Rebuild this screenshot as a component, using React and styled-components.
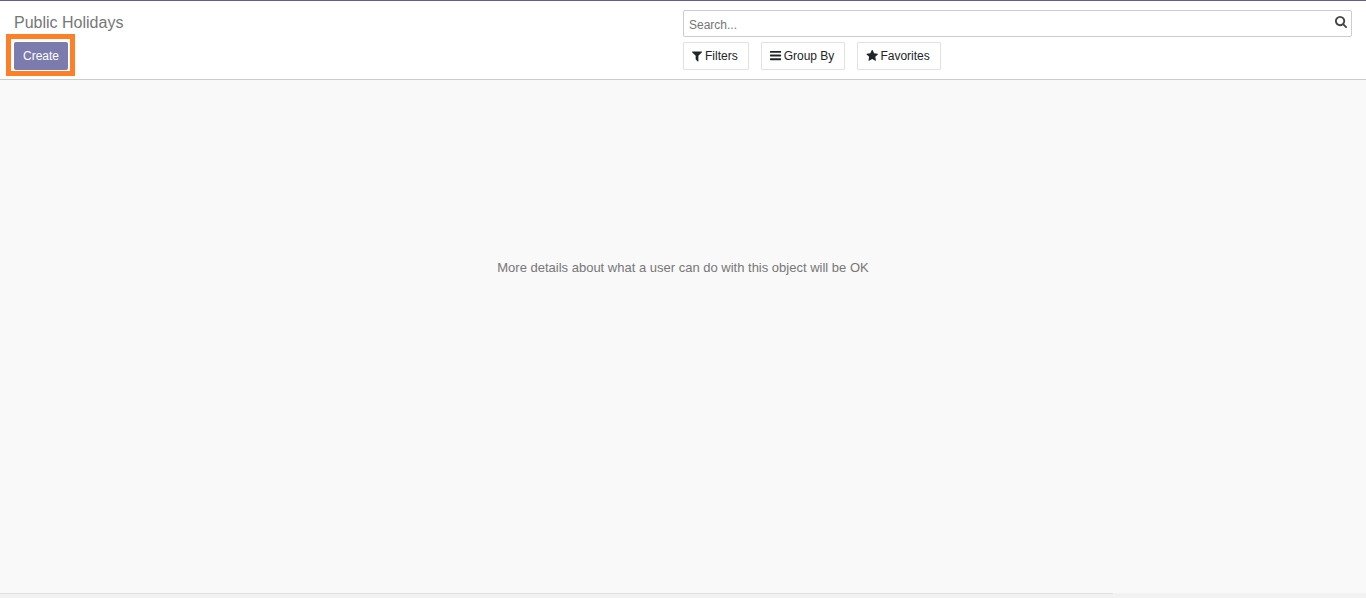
import React, { useState } from "react";
import styled, { createGlobalStyle } from "styled-components";

const icons = {
  filter:
    "M1595 295q17 41-14 70l-493 493v742q0 42-39 59-13 5-25 5-27 0-45-19l-256-256q-19-19-19-45v-486l-493-493q-31-29-14-70 17-39 59-39h1280q42 0 59 39z",
  bars:
    "M1664 1344v128q0 26-19 45t-45 19h-1408q-26 0-45-19t-19-45v-128q0-26 19-45t45-19h1408q26 0 45 19t19 45zm0-512v128q0 26-19 45t-45 19h-1408q-26 0-45-19t-19-45v-128q0-26 19-45t45-19h1408q26 0 45 19t19 45zm0-512v128q0 26-19 45t-45 19h-1408q-26 0-45-19t-19-45v-128q0-26 19-45t45-19h1408q26 0 45 19t19 45z",
  star:
    "M1728 647q0 22-26 48l-363 354 86 500q1 7 1 20 0 21-10.5 35.5t-30.5 14.5q-19 0-40-12l-449-236-449 236q-22 12-40 12-21 0-31.5-14.5t-10.5-35.5q0-6 2-20l86-500-364-354q-25-27-25-48 0-37 56-46l502-73 225-455q19-41 49-41t49 41l225 455 502 73q56 9 56 46z",
  search:
    "M1216 832q0-185-131.5-316.5t-316.5-131.5-316.5 131.5-131.5 316.5 131.5 316.5 316.5 131.5 316.5-131.5 131.5-316.5zm512 832q0 52-38 90t-90 38q-54 0-90-38l-343-342q-179 124-399 124-143 0-273.5-55.5t-225-150-150-225-55.5-273.5 55.5-273.5 150-225 225-150 273.5-55.5 273.5 55.5 225 150 150 225 55.5 273.5q0 220-124 399l343 343q37 37 37 90z",
};

const viewBoxes = {
  filter: "192 192 1536 1536",
  bars: "128 128 1664 1664",
  star: "0 64 1728 1728",
  search: "64 128 1664 1664",
};

const Icon = ({ name, size = 12 }) => (
  <svg
    width={size}
    height={size}
    viewBox={viewBoxes[name]}
    fill="currentColor"
    aria-hidden="true"
  >
    <path d={icons[name]} />
  </svg>
);

const App = () => {
  const [query, setQuery] = useState("");

  return (
    <Page>
      <GlobalStyle />
      <ControlPanel>
        <Column>
          <Title>Public Holidays</Title>
          <Highlight>
            <CreateButton type="button">Create</CreateButton>
          </Highlight>
        </Column>
        <Column>
          <SearchBox onSubmit={(e) => e.preventDefault()}>
            <SearchInput
              type="text"
              aria-label="Search"
              placeholder="Search..."
              value={query}
              onChange={(e) => setQuery(e.target.value)}
            />
            <SearchButton aria-label="Run search">
              <Icon name="search" />
            </SearchButton>
          </SearchBox>
          <Options>
            <OptionButton type="button">
              <Icon name="filter" size={11} />
              Filters
            </OptionButton>
            <OptionButton type="button">
              <Icon name="bars" />
              Group By
            </OptionButton>
            <OptionButton type="button">
              <Icon name="star" />
              Favorites
            </OptionButton>
          </Options>
        </Column>
      </ControlPanel>
      <Content>
        <Message>
          More details about what a user can do with this object will be OK
        </Message>
      </Content>
      <Footer>
        <FooterLine />
      </Footer>
    </Page>
  );
};

const GlobalStyle = createGlobalStyle`
  * {
    box-sizing: border-box;
  }
  body {
    margin: 0;
    font-family: "Liberation Sans", Arial, sans-serif;
    font-size: 12px;
    color: #212529;
  }
  button,
  input {
    font-family: inherit;
    font-size: inherit;
    color: inherit;
  }
`;

const Page = styled.div`
  min-height: 100vh;
  display: flex;
  flex-direction: column;
  background-color: #f9f9f9;
  border-top: 1px solid #5f5e97;
`;

const ControlPanel = styled.header`
  display: grid;
  grid-template-columns: 1fr 1fr;
  padding: 9px 14px;
  background-color: #fff;
  border-bottom: 1px solid #cccccc;
`;

const Column = styled.div`
  display: flex;
  flex-direction: column;
  align-items: flex-start;
  gap: 5px;
`;

const Title = styled.h1`
  margin: 0;
  height: 27px;
  font-size: 16px;
  font-weight: 400;
  line-height: 26px;
  color: #777777;
`;

/* orange frame drawn around the button */
const Highlight = styled.div`
  position: relative;
  display: flex;
  &::after {
    content: "";
    position: absolute;
    inset: -8px -7px -6px -8px;
    border: 5px solid #ff7f27;
    pointer-events: none;
  }
`;

const CreateButton = styled.button`
  height: 28px;
  padding: 0 9px;
  border: 0;
  border-radius: 2px;
  background-color: #7c7bad;
  color: #fff;
  cursor: pointer;
`;

const SearchBox = styled.form`
  display: flex;
  width: 100%;
  height: 27px;
  border: 1px solid #cccccc;
  border-radius: 2px;
`;

const SearchInput = styled.input`
  flex: 1;
  min-width: 0;
  padding: 3px 5px 0;
  border: 0;
  outline: 0;
  background: none;
  &::placeholder {
    color: #757575;
    opacity: 1;
  }
`;

const SearchButton = styled.button`
  display: flex;
  align-items: flex-start;
  padding: 5px 4px;
  border: 0;
  background: none;
  color: #444444;
  cursor: pointer;
`;

const Options = styled.div`
  display: flex;
  gap: 12px;
`;

const OptionButton = styled.button`
  display: flex;
  align-items: center;
  gap: 2px;
  height: 28px;
  padding: 0 10px 0 8px;
  border: 1px solid #dee2e6;
  border-radius: 1px;
  background-color: #fff;
  cursor: pointer;
`;

const Content = styled.main`
  flex: 1;
  padding: 180px 16px 16px;
`;

const Message = styled.p`
  margin: 0;
  font-size: 13px;
  line-height: 16px;
  text-align: center;
  color: #777777;
`;

const Footer = styled.footer`
  height: 5px;
  background-color: #f2f2f2;
`;

const FooterLine = styled.div`
  width: 81.5%;
  height: 1px;
  background-color: #e1e1e1;
`;

export default App;
